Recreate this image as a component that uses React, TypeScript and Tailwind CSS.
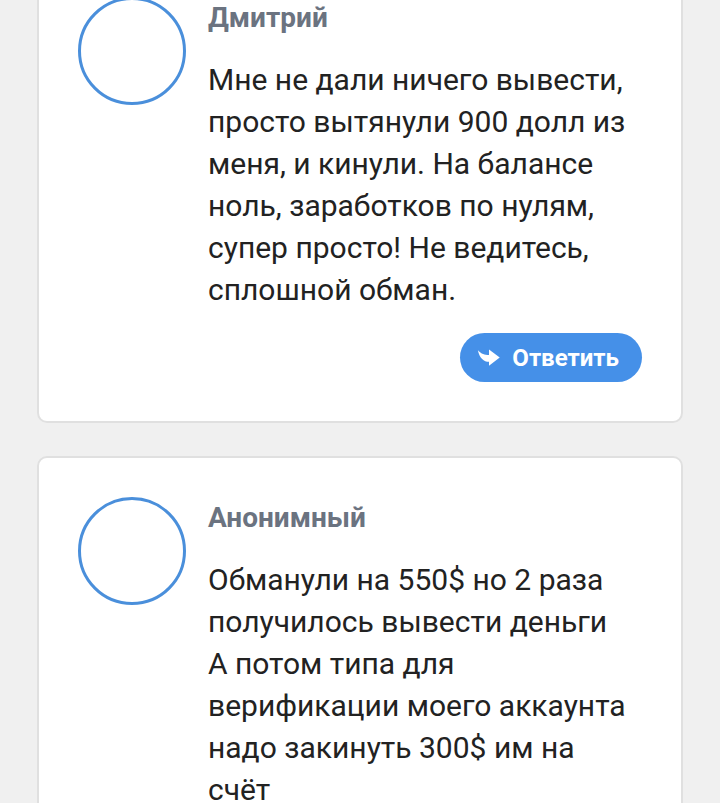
import React from "react";

type Review = { name: string; text: string };

const reviews: Review[] = [
  {
    name: "Дмитрий",
    text: "Мне не дали ничего вывести, просто вытянули 900 долл из меня, и кинули. На балансе ноль, заработков по нулям, супер просто! Не ведитесь, сплошной обман.",
  },
  {
    name: "Анонимный",
    text: "Обманули на 550$ но 2 раза получилось вывести деньги\nА потом типа для верификации моего аккаунта надо закинуть 300$ им на счёт",
  },
];

function ReplyIcon() {
  return (
    <svg width="24" height="22" viewBox="0 0 28 24" className="shrink-0">
      <path d="M14 2 L26.5 11.5 L14 21 L14 16.5 C8 16.5 3 12.5 1 3 C5 7.5 9 8.5 14 8.5 Z" fill="white" />
    </svg>
  );
}

function ReviewCard({ review }: { review: Review }) {
  return (
    <div className="bg-white border-2 border-[#e0e0e0] rounded-[10px] p-[39px]">
      <div className="flex gap-[22px]">
        <div className="w-[108px] h-[108px] rounded-full border-[3px] border-[#4a8fdb] shrink-0" />
        <div className="flex-1 min-w-0">
          <div className="pt-[4px] text-[28px] leading-[33px] font-bold text-[#6b7380]">{review.name}</div>
          <p className="mt-[25px] text-[30px] leading-[42px] text-[#222] whitespace-pre-line">{review.text}</p>
          <div className="flex justify-end mt-[22px]">
            <button className="h-[49px] rounded-full bg-[#4590e8] pl-[17px] pr-[23px] flex items-center gap-[11px] text-white text-[24px] font-bold">
              <ReplyIcon />
              <span>Ответить</span>
            </button>
          </div>
        </div>
      </div>
    </div>
  );
}

export default function App() {
  return (
    <div className="h-[803px] overflow-hidden bg-[#f0f0f0] font-['Roboto',sans-serif]">
      <div className="px-[37px] -mt-[44px] flex flex-col gap-[33px]">
        {reviews.map((r, i) => (
          <ReviewCard key={i} review={r} />
        ))}
      </div>
    </div>
  );
}
